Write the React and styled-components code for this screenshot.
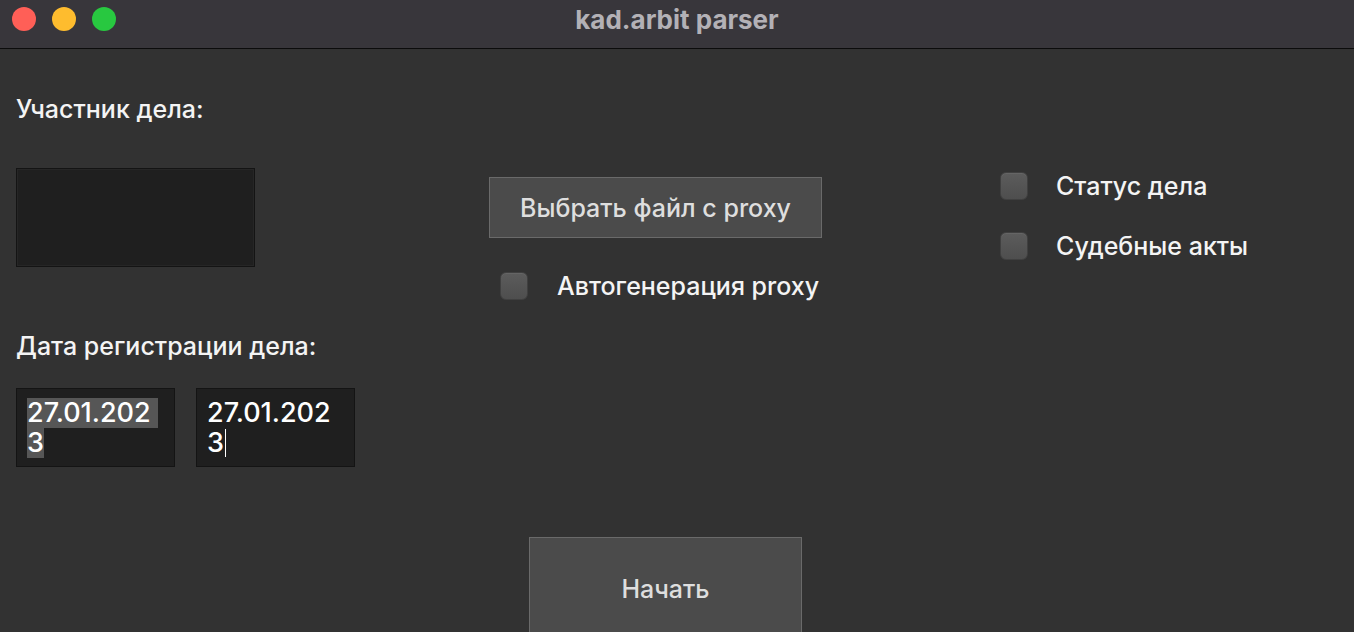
import React from "react";
import styled, { createGlobalStyle } from "styled-components";

//----------- estilos ------------

const GlobalStyle = createGlobalStyle`
  html, body {
    margin: 0;
    padding: 0;
    background: #323232;
  }
  body {
    font-family: Inter, "Noto Sans", "Liberation Sans", sans-serif;
  }
`;

const Window = styled.div`
  width: 100%;
  height: 100vh;
  overflow: hidden;
  background: #323232;
  color: #f2f2f2;
`;

const TitleBar = styled.header`
  position: relative;
  height: 48px;
  background: #38363b;
  border-bottom: 1px solid #0c0c0c;
  display: flex;
  align-items: center;
  justify-content: center;
`;

const Lights = styled.div`
  position: absolute;
  left: 12px;
  top: 7px;
  display: flex;
  gap: 16px;
`;

const Light = styled.span`
  width: 24px;
  height: 24px;
  border-radius: 50%;
  background: ${(p) => p.color};
`;

const Title = styled.h1`
  margin: 0 0 10px;
  font-size: 26px;
  font-weight: 700;
  color: #b3b1b6;
`;

const Content = styled.main`
  padding: 47px 16px 0;
  display: grid;
  grid-template-columns: 473px 511px 1fr;
  row-gap: 70px;
`;

const Column = styled.section`
  display: flex;
  flex-direction: column;
  align-items: flex-start;
  padding-top: ${(p) => p.top || 0}px;
`;

const Label = styled.div`
  font-size: 25px;
  font-weight: 500;
  line-height: 26px;
  color: #f4f4f4;
  margin-bottom: ${(p) => p.gap}px;
`;

const Entry = styled.div`
  box-sizing: border-box;
  width: 239px;
  height: 99px;
  background: #1f1f1f;
  border: 1px solid #141414;
  box-shadow: inset 0 0 0 1px #262626;
  margin-bottom: 66px;
`;

const Dates = styled.div`
  display: flex;
  gap: 21px;
`;

const DateBox = styled.div`
  box-sizing: border-box;
  width: 159px;
  height: 79px;
  background: #1f1f1f;
  border: 1px solid #141414;
  padding: 9px 0 0 10px;
  font-size: 27px;
  font-weight: 500;
  line-height: 30px;
  color: #ffffff;
`;

const Line = styled.div`
  display: flex;
  align-items: center;
`;

const Selected = styled.span`
  background: ${(p) => (p.on ? "#565656" : "transparent")};
  white-space: pre;
`;

const Caret = styled.span`
  width: 1px;
  height: 28px;
  background: #ffffff;
  margin-left: 1px;
`;

const Button = styled.button`
  box-sizing: border-box;
  width: ${(p) => p.w}px;
  height: ${(p) => p.h}px;
  background: #4b4b4b;
  border: 1px solid #6a6a6a;
  border-radius: 0;
  color: #dedede;
  font-family: inherit;
  font-size: 25px;
  font-weight: 500;
  padding: 0;
  margin-left: ${(p) => p.left || 0}px;
  cursor: default;
`;

const CheckRow = styled.label`
  display: flex;
  align-items: center;
  gap: ${(p) => p.gap || 28}px;
  margin-left: ${(p) => p.left || 0}px;
  margin-top: ${(p) => p.top || 0}px;
  height: 28px;
  font-size: 25px;
  font-weight: 500;
  line-height: 28px;
  color: #f4f4f4;
`;

const Box = styled.span`
  box-sizing: border-box;
  width: 28px;
  height: 28px;
  border-radius: 6px;
  background: linear-gradient(#5c5c5c, #4e4e4e);
  border: 1px solid #404040;
  box-shadow: inset 0 1px 0 rgba(255, 255, 255, 0.06);
`;

const Footer = styled.div`
  grid-column: 2;
`;

//-------------- componente -------------------

const App = () => {
  return (
    <Window>
      <GlobalStyle />
      <TitleBar>
        <Lights>
          <Light color="#ff5f57" />
          <Light color="#febc2e" />
          <Light color="#28c840" />
        </Lights>
        <Title>kad.arbit parser</Title>
      </TitleBar>
      <Content>
        <Column>
          <Label gap={46}>Участник дела:</Label>
          <Entry />
          <Label gap={29}>Дата регистрации дела:</Label>
          <Dates>
            <DateBox>
              <Line>
                <Selected on>27.01.202 </Selected>
              </Line>
              <Line>
                <Selected on>3</Selected>
              </Line>
            </DateBox>
            <DateBox>
              <Line>
                <Selected>27.01.202</Selected>
              </Line>
              <Line>
                <Selected>3</Selected>
                <Caret />
              </Line>
            </DateBox>
          </Dates>
        </Column>
        <Column top={81}>
          <Button w={333} h={61}>Выбрать файл с proxy</Button>
          <CheckRow left={11} top={34} gap={29}>
            <Box />
            Автогенерация proxy
          </CheckRow>
        </Column>
        <Column top={76}>
          <CheckRow>
            <Box />
            Статус дела
          </CheckRow>
          <CheckRow top={32}>
            <Box />
            Судебные акты
          </CheckRow>
        </Column>
        <Footer>
          <Button w={273} h={104} left={40}>Начать</Button>
        </Footer>
      </Content>
    </Window>
  );
};

export default App;
